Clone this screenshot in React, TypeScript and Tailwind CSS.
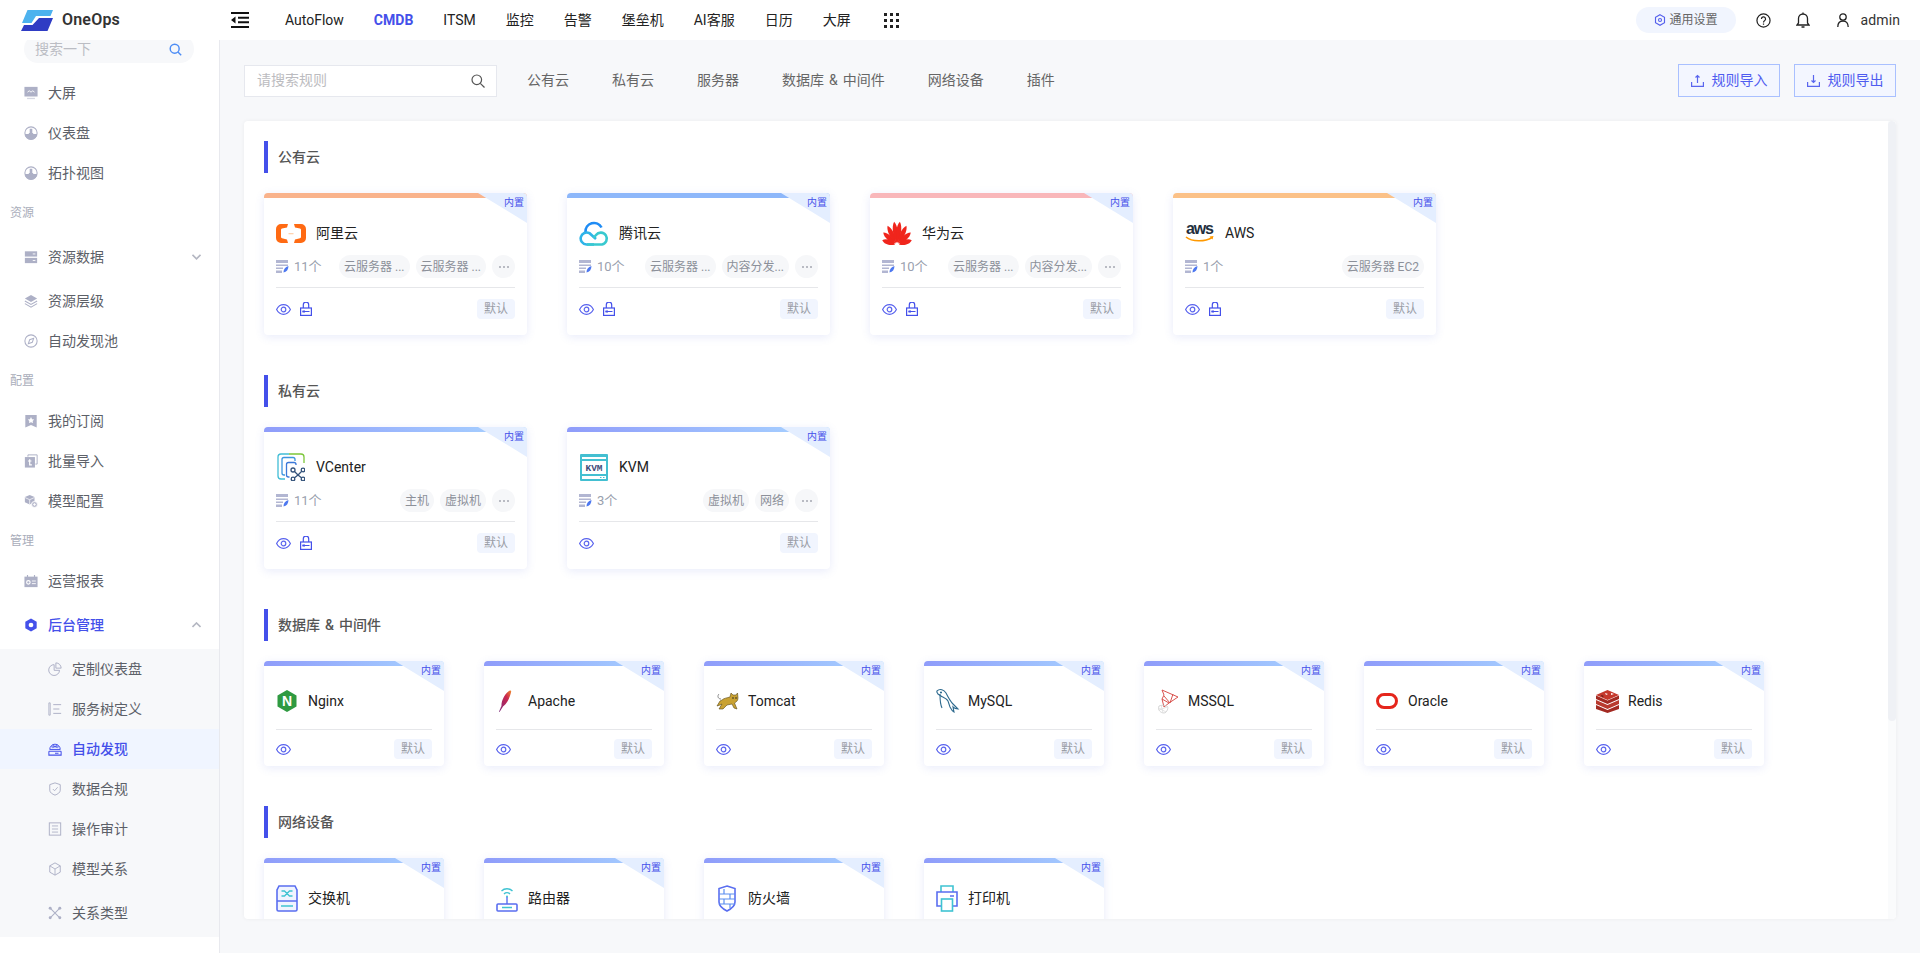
import React from "react";

const Ico = ({ size = 14, color = "#adb0c6", children }: { size?: number; color?: string; children: React.ReactNode }) => (
  <svg width={size} height={size} viewBox="0 0 16 16" fill="none" stroke="none" color={color} className="shrink-0">
    {children}
  </svg>
);

const sideIcons: Record<string, React.ReactNode> = {
  screen: (
    <>
      <rect x="0.500" y="1" width="15" height="11" fill="currentColor" />
      <path d="M4 7l2-1.500 2 1.500 2-1.500 2 1.500" stroke="#fff" strokeWidth="1" />
      <rect x="3.500" y="13.500" width="9" height="1.500" fill="#d5d7e2" />
    </>
  ),
  gauge: (
    <>
      <circle cx="8" cy="8" r="7" stroke="currentColor" strokeWidth="1.200" />
      <path d="M1 9h4.500v-1h1V3h3v5h1v1H15a7 7 0 0 1-14 0z" fill="currentColor" />
    </>
  ),
  server: (
    <>
      <rect x="1" y="1.500" width="14" height="6" fill="currentColor" />
      <rect x="1" y="9" width="14" height="6" fill="currentColor" />
      <rect x="10" y="4" width="3" height="1" fill="#fff" />
      <rect x="10" y="11.500" width="3" height="1" fill="#fff" />
    </>
  ),
  layers: (
    <>
      <path d="M8 1l7 4-7 4-7-4z" fill="currentColor" />
      <path d="M1 8l7 4 7-4M1 11l7 4 7-4" stroke="currentColor" strokeWidth="1.200" />
    </>
  ),
  compass: (
    <>
      <circle cx="8" cy="8" r="7" stroke="currentColor" strokeWidth="1.200" />
      <path d="M11 5l-1.500 4.500L5 11l1.500-4.500z" stroke="currentColor" strokeWidth="1.200" />
    </>
  ),
  bookmark: (
    <>
      <path d="M1.500 1h13v14.500L8 12.500l-6.500 3z" fill="currentColor" />
      <path d="M8 3.500l1.200 2.400 2.500.3-1.800 1.700.5 2.500L8 9.300l-2.400 1.100.5-2.500-1.800-1.700 2.500-.3z" fill="#fff" />
    </>
  ),
  upload: (
    <>
      <path d="M4.500 3V1h10.500v10.500h-2" stroke="currentColor" strokeWidth="1.100" />
      <rect x="1" y="3.500" width="11.500" height="12" fill="currentColor" />
      <path d="M6.500 6v6.500h2.500M4.500 8h4" stroke="#fff" strokeWidth="1.400" />
    </>
  ),
  model: (
    <>
      <path d="M6.500 1l5.500 2.500v6L6.500 12 1 9.500v-6z" fill="currentColor" />
      <path d="M1 4l5.500 2.500L12 4M6.500 6.500V12" stroke="#fff" strokeWidth="0.800" />
      <circle cx="12" cy="12" r="3.500" fill="#bfc1d2" stroke="#fff" />
      <path d="M10.500 12h3M12 10.500v3" stroke="#fff" />
    </>
  ),
  report: (
    <>
      <path d="M0.500 3h15v12h-15z" fill="currentColor" />
      <path d="M4 1v3M12 1v3" stroke="currentColor" strokeWidth="1.300" />
      <circle cx="5" cy="9.500" r="2" stroke="#fff" strokeWidth="1.300" />
      <path d="M9 8h4.500M9 11h4.500" stroke="#fff" />
    </>
  ),
  hex: (
    <>
      <path d="M8 0.500l6.500 3.700v7.600L8 15.500l-6.500-3.700V4.200z" fill="currentColor" />
      <circle cx="8" cy="8" r="2.700" fill="#fff" />
    </>
  ),
  pie: (
    <>
      <path d="M7 3a6.200 6.200 0 1 0 6.200 6.500H7z" stroke="currentColor" strokeWidth="1.100" />
      <path d="M9 1a6 6 0 0 1 6 6H9z" stroke="currentColor" strokeWidth="1.100" />
    </>
  ),
  tree: (
    <>
      <path d="M1 1h1.500v14H1z" stroke="currentColor" strokeWidth="1" />
      <path d="M6 3h9M6 8h7M6 13h9" stroke="currentColor" strokeWidth="1.100" />
    </>
  ),
  discover: (
    <>
      <path d="M2 8.500a6 6 0 0 1 12 0z" stroke="currentColor" strokeWidth="1.100" />
      <path d="M3.500 5.500h9M5 3.500l6 3M11 3.500l-6 3" stroke="currentColor" strokeWidth="0.900" />
      <path d="M1 10.500h14M1 10.500V15h14v-4.500M8 12.800h4" stroke="currentColor" strokeWidth="1.200" />
    </>
  ),
  shield: (
    <>
      <path d="M8 1l6 2v6.500c0 2.500-3 4.500-6 5.500-3-1-6-3-6-5.500V3z" stroke="currentColor" strokeWidth="1.100" />
      <path d="M5.500 8l2 2 3.500-4" stroke="currentColor" strokeWidth="1" />
    </>
  ),
  list: (
    <>
      <rect x="1.500" y="1" width="13" height="14" stroke="currentColor" strokeWidth="1.100" />
      <path d="M4.500 4.500h7M4.500 8h7M4.500 11.500h7" stroke="currentColor" strokeWidth="1" />
    </>
  ),
  cube: (
    <>
      <path d="M8 1l6 3.400v7.200L8 15l-6-3.400V4.400z" stroke="currentColor" strokeWidth="1.100" />
      <path d="M2 4.400L8 8l6-3.600M8 8v7" stroke="currentColor" strokeWidth="1" />
    </>
  ),
  relation: (
    <>
      <path d="M2.500 2.500l11 11M13.500 2.500l-11 11" stroke="currentColor" strokeWidth="1.200" />
      <circle cx="2.500" cy="2.500" r="1.700" fill="currentColor" />
      <circle cx="13.500" cy="2.500" r="1.700" fill="currentColor" />
      <circle cx="2.500" cy="13.500" r="1.700" fill="currentColor" />
      <circle cx="13.500" cy="13.500" r="1.700" fill="currentColor" />
    </>
  ),
};

type SideRow =
  | { kind: "label"; text: string }
  | { kind: "item"; text: string; icon: string; tall?: boolean; arrow?: "up" | "down"; active?: boolean };

const sideTop: SideRow[] = [
  { kind: "item", text: "大屏", icon: "screen" },
  { kind: "item", text: "仪表盘", icon: "gauge" },
  { kind: "item", text: "拓扑视图", icon: "gauge" },
  { kind: "label", text: "资源" },
  { kind: "item", text: "资源数据", icon: "server", tall: true, arrow: "down" },
  { kind: "item", text: "资源层级", icon: "layers" },
  { kind: "item", text: "自动发现池", icon: "compass" },
  { kind: "label", text: "配置" },
  { kind: "item", text: "我的订阅", icon: "bookmark" },
  { kind: "item", text: "批量导入", icon: "upload" },
  { kind: "item", text: "模型配置", icon: "model" },
  { kind: "label", text: "管理" },
  { kind: "item", text: "运营报表", icon: "report" },
  { kind: "item", text: "后台管理", icon: "hex", tall: true, arrow: "up", active: true },
];

const sideSub = [
  { text: "定制仪表盘", icon: "pie" },
  { text: "服务树定义", icon: "tree" },
  { text: "自动发现", icon: "discover", active: true },
  { text: "数据合规", icon: "shield" },
  { text: "操作审计", icon: "list" },
  { text: "模型关系", icon: "cube" },
  { text: "关系类型", icon: "relation", tall: true },
];

const Sidebar = () => (
  <aside className="w-[220px] shrink-0 border-r border-[#e8e9ee] bg-white overflow-hidden">
    <div className="ml-6 -mt-[5px] mb-[10px] flex h-7 w-[170px] items-center justify-between rounded-full bg-[#f7f8fa] pl-[11px] pr-3">
      <span className="text-[14px] text-[#bbbdc4]">搜索一下</span>
      <svg width="13" height="13" viewBox="0 0 16 16" fill="none" stroke="#4d8df5" strokeWidth="1.800">
        <circle cx="7" cy="7" r="5.500" />
        <path d="M11 11l4 4" />
      </svg>
    </div>
    {sideTop.map((r) =>
      r.kind === "label" ? (
        <div key={r.text} className="flex h-10 items-center pl-[10px] text-[12px] text-[#a9adba]">
          {r.text}
        </div>
      ) : (
        <div key={r.text} className={`flex items-center gap-[10px] pl-6 pr-[18px] ${r.tall ? "h-12" : "h-10"}`}>
          <Ico color={r.active ? "#4450ea" : "#adb0c6"}>{sideIcons[r.icon]}</Ico>
          <span className={`text-[14px] ${r.active ? "font-medium text-[#4450ea]" : "text-[#5c6068]"}`}>{r.text}</span>
          {r.arrow && (
            <svg width="9" height="6" viewBox="0 0 9 6" fill="none" stroke="#b4b7c2" strokeWidth="1.600" className="ml-auto">
              <path d={r.arrow === "down" ? "M0.500 0.800l4 4 4-4" : "M0.500 5l4-4 4 4"} />
            </svg>
          )}
        </div>
      ),
    )}
    <div className="bg-[#f7f8fa]">
      {sideSub.map((r) => (
        <div
          key={r.text}
          className={`flex items-center gap-[10px] pl-12 ${r.tall ? "h-12" : "h-10"} ${r.active ? "bg-[#f0f5ff]" : ""}`}
        >
          <Ico color={r.active ? "#4450ea" : "#adb0c6"}>{sideIcons[r.icon]}</Ico>
          <span className={`text-[14px] ${r.active ? "font-medium text-[#4450ea]" : "text-[#5c6068]"}`}>{r.text}</span>
        </div>
      ))}
    </div>
  </aside>
);

const navItems = ["AutoFlow", "CMDB", "ITSM", "监控", "告警", "堡垒机", "AI客服", "日历", "大屏"];

const Header = () => (
  <header className="flex h-10 shrink-0 items-center bg-white">
    <div className="flex w-[231px] shrink-0 items-center pl-[21px]">
      <svg width="32" height="21" viewBox="0 0 32 21">
        <path d="M6.500 0H32l-2.500 6H15l-4.500 7H1z" fill="#4db2ee" />
        <path d="M0 21l3-6h8.500L18 8h14l-5.500 13z" fill="#2f3cc4" />
      </svg>
      <span className="ml-[9px] text-[16px] font-semibold tracking-[0.2px] text-[#333]">OneOps</span>
    </div>
    <svg width="18" height="16" viewBox="0 0 18 16" className="shrink-0">
      <path d="M0 0h18v2H0zM0 14h18v2H0zM7 4.700h11v2H7zM7 9.300h11v2H7zM4.500 4.500v7L0 8z" fill="#111" />
    </svg>
    <nav className="ml-9 flex items-center gap-[30px] text-[14px] text-[#222]">
      {navItems.map((n) => (
        <span key={n} className={n === "CMDB" ? "font-bold text-[#4450ea]" : ""}>
          {n}
        </span>
      ))}
      <div className="grid grid-cols-3 gap-[3px] pl-[3px]">
        {Array.from({ length: 9 }).map((_, i) => (
          <span key={i} className="h-[3px] w-[3px] bg-[#222]" />
        ))}
      </div>
    </nav>
    <div className="ml-auto flex items-center pr-5">
      <div className="flex h-[26px] w-[100px] items-center justify-center gap-1 rounded-full bg-[#f1f5fe] text-[12px] text-[#666]">
        <Ico size={12} color="#5560ec">
          <path d="M8 1l6 3.500v7L8 15l-6-3.500v-7z" stroke="currentColor" strokeWidth="1.500" />
          <circle cx="8" cy="8" r="2" stroke="currentColor" strokeWidth="1.500" />
        </Ico>
        通用设置
      </div>
      <svg width="15" height="15" viewBox="0 0 16 16" fill="none" stroke="#222" strokeWidth="1.300" className="ml-5">
        <circle cx="8" cy="8" r="7" />
        <path d="M5.800 6.300a2.200 2.200 0 1 1 3.300 1.900c-.7.400-1.100.9-1.100 1.800M8 11.300v1.200" />
      </svg>
      <svg width="14" height="16" viewBox="0 0 14 16" fill="none" stroke="#222" strokeWidth="1.300" className="ml-[25px]">
        <path d="M1 13h12l-1.500-2V6.500a4.500 4.500 0 0 0-9 0V11zM7 .500V2M5.500 15h3" />
      </svg>
      <svg width="12" height="14" viewBox="0 0 12 14" fill="none" stroke="#222" strokeWidth="1.300" className="ml-[27px]">
        <circle cx="6" cy="4" r="3.200" />
        <path d="M.8 14c0-3.500 1.800-6 5.200-6s5.200 2.500 5.200 6" />
      </svg>
      <span className="ml-3 text-[14px] tracking-[0.1px] text-[#333]">admin</span>
    </div>
  </header>
);

const Eye = () => (
  <svg width="15" height="11" viewBox="0 0 15 11" fill="none" stroke="#5a64ee" strokeWidth="1.200" className="shrink-0">
    <path d="M.6 5.500C2.200 2.300 4.600.7 7.500.7s5.300 1.600 6.900 4.800c-1.600 3.200-4 4.800-6.900 4.800S2.200 8.700.6 5.500z" />
    <circle cx="7.500" cy="5.500" r="2.300" />
  </svg>
);

const Lock = () => (
  <svg width="12" height="14" viewBox="0 0 12 14" fill="none" stroke="#4450ea" strokeWidth="1.200" className="shrink-0">
    <path d="M3.300 6V2.800a2.700 2.700 0 0 1 5.400 0V6" />
    <rect x=".6" y="6" width="10.800" height="7.400" />
    <path d="M2.500 9.500h7" />
    <rect x="2.500" y="8.500" width="2.500" height="2" fill="#4450ea" stroke="none" />
  </svg>
);

const ListIcon = () => (
  <svg width="13" height="13" viewBox="0 0 13 13" className="shrink-0">
    <path d="M0 0h12v3H0zM0 4.500h12v1.500H0zM0 7.500h7v1.500H0zM0 10.500h6V13H0z" fill="#b2b6d2" />
    <path d="M7.500 12.500c0-3 1.500-5.500 5-6.500-.2 3.500-1.800 6-5 6.500z" fill="#4d78f0" />
  </svg>
);

const logos: Record<string, React.ReactNode> = {
  ali: (
    <svg width="30" height="19" viewBox="0 0 30 19">
      <path d="M12 0H5a5 5 0 0 0-5 5v9a5 5 0 0 0 5 5h7l-1-3.500-5-1.200a1.200 1.200 0 0 1-1-1.200V5.700a1.200 1.200 0 0 1 1-1.200l5-1z" fill="#ff6a13" />
      <path d="M18 0h7a5 5 0 0 1 5 5v9a5 5 0 0 1-5 5h-7l1-3.500 5-1.200a1.200 1.200 0 0 0 1-1.200V5.700a1.200 1.200 0 0 0-1-1.200l-5-1z" fill="#ff6a13" />
      <rect x="12.500" y="9" width="5" height="1.300" fill="#ffd3b0" />
    </svg>
  ),
  tencent: (
    <svg width="30" height="26" viewBox="0 0 30 26" fill="none" strokeWidth="2.600">
      <path d="M6.500 12a8.500 8.500 0 0 1 16-4.500" stroke="#1f8cf5" />
      <path d="M15 24.500H7.500a6 6 0 1 1 3-11.300L17 19" stroke="#2fb4e8" />
      <path d="M8 24.500h15a6 6 0 1 0-6-9.500l-2.500 3" stroke="#38c9cf" />
    </svg>
  ),
  huawei: (
    <svg width="30" height="24" viewBox="0 0 30 24" fill="#f0251c">
      {[
        [-72, 15.500],
        [-48, 18.500],
        [-26, 21.500],
        [-7, 23.500],
        [7, 23.500],
        [26, 21.500],
        [48, 18.500],
        [72, 15.500],
      ].map(([a, l]) => (
        <path key={a} transform={`translate(15 24) rotate(${a})`} d={`M0-2C-3-${l * 0.4}-3.400-${l * 0.8} 0-${l}C3.400-${l * 0.8} 3-${l * 0.4} 0-2Z`} />
      ))}
    </svg>
  ),
  aws: (
    <svg width="30" height="24" viewBox="0 0 30 24">
      <text x="1" y="13" fontSize="16" fontWeight="700" fill="#232f3e" fontFamily="Liberation Sans, sans-serif" textLength="28">
        aws
      </text>
      <path d="M1 16c6 5 19 5 26 .5" fill="none" stroke="#f90" strokeWidth="1.600" />
      <path d="M24.500 15.500l4-.5-1 3.500z" fill="#f90" />
    </svg>
  ),
  vcenter: (
    <svg width="28" height="28" viewBox="0 0 28 28" fill="none" strokeWidth="1.300" className="ml-px">
      <path d="M12 1H4a3 3 0 0 0-3 3v19a3 3 0 0 0 3 3h4" stroke="#41bdd6" />
      <path d="M12 1h12a3 3 0 0 1 3 3v6" stroke="#7cc63a" />
      <path d="M18 8V6.500a2 2 0 0 0-2-2H7a2 2 0 0 0-2 2V20a2 2 0 0 0 2 2h1" stroke="#3c95df" />
      <path d="M19 12v-.5a2 2 0 0 0-2-2h-5.500a2 2 0 0 0-2 2V22a2 2 0 0 0 2 2h1" stroke="#3c78d8" />
      <path d="M16 17l5 5M26 17l-5 5M16 26l5-4M26 26l-5-4" stroke="#33527a" />
      <circle cx="16" cy="17" r="2" fill="#fff" stroke="#33527a" />
      <circle cx="26" cy="17" r="1.800" fill="#fff" stroke="#33527a" />
      <circle cx="16" cy="26" r="1.800" fill="#fff" stroke="#33527a" />
      <circle cx="26" cy="26" r="1.800" fill="#fff" stroke="#33527a" />
    </svg>
  ),
  kvm: (
    <svg width="28" height="27" viewBox="0 0 28 27" className="ml-px">
      <rect width="28" height="27" rx="1" fill="#43bfd1" />
      <rect x="2" y="3" width="24" height="2" fill="#fff" />
      <rect x="2" y="7" width="24" height="13" fill="#fff" />
      <rect x="2" y="22" width="24" height="3" fill="#fff" />
      <rect x="20" y="23" width="1.500" height="1" fill="#43bfd1" />
      <rect x="23" y="23" width="1.500" height="1" fill="#43bfd1" />
      <text x="14" y="17" textAnchor="middle" fontSize="9.500" fontWeight="700" fill="#3f4c7a" fontFamily="Liberation Mono, monospace">
        KVM
      </text>
    </svg>
  ),
  nginx: (
    <svg width="22" height="22" viewBox="0 0 22 22">
      <path d="M11 0l9.500 5.500v11L11 22l-9.500-5.500v-11z" fill="#2f9a41" />
      <text x="11" y="16" textAnchor="middle" fontSize="14" fontWeight="700" fill="#fff" fontFamily="Liberation Sans, sans-serif">
        N
      </text>
    </svg>
  ),
  apache: (
    <svg width="22" height="23" viewBox="0 0 22 23">
      <defs>
        <linearGradient id="feather" x1="1" y1="0" x2="0" y2="1">
          <stop offset="0" stopColor="#f08a2c" />
          <stop offset="0.35" stopColor="#c9264f" />
          <stop offset="1" stopColor="#7a2a7c" />
        </linearGradient>
      </defs>
      <path d="M3 22c1-3 1.500-4 2.500-6C5 11 9 3 14 .5c1-.3 1.500.5 1 2-1 4-3 10-8 14-1 1.500-2 3.500-3.500 5.500z" fill="url(#feather)" />
    </svg>
  ),
  tomcat: (
    <svg width="24" height="20" viewBox="0 0 24 20">
      <path d="M6 9c2-2 5-2 8-3l1-4 2 2h3l1.500-2 .5 5c0 3-2 4-3.500 5l2.500 6-3-1-2-4-5 1-4 4H3l3-5-2 1-3 1 3-5z" fill="#c9a233" stroke="#5a4a1a" strokeWidth="0.600" />
      <path d="M5 8C2 8 1 5 3 3" fill="none" stroke="#888" />
      <circle cx="17" cy="7" r="0.800" fill="#222" />
      <circle cx="20" cy="7" r="0.800" fill="#222" />
    </svg>
  ),
  mysql: (
    <svg width="24" height="26" viewBox="0 0 24 26" fill="none" stroke="#2f6b8f" strokeWidth="1.100">
      <path d="M1 3c3-3 7-1 9 2 2 4 4 8 7 11 2 2 4 4 5 5-2 0-4-1-5-2l1 5c-2-1-3-3-4-5l-2-6C10 10 6 9 5 8L2 6 .8 4z" />
      <path d="M4 6c0 5 0 10 2 14" />
      <circle cx="5" cy="4.500" r="0.500" fill="#2f6b8f" />
    </svg>
  ),
  mssql: (
    <svg width="23" height="25" viewBox="0 0 23 25" fill="none" strokeWidth="0.800">
      <path d="M6 1l16 7-9 6-7-4 2-4zM8 7l6 7 3-9M6 10l2 8 5-4" stroke="#d9534f" strokeWidth="1" />
      <path d="M3 17c2-1 6-1 8 0s0 7-3 7-7-3-5-7z" stroke="#ccc" />
      <path d="M3 19l7 4M5 16l2 8M11 18l-8 3" stroke="#ddd" />
    </svg>
  ),
  oracle: (
    <svg width="22" height="16" viewBox="0 0 22 16">
      <rect x="1.500" y="1.500" width="19" height="13" rx="6.500" fill="none" stroke="#e5261c" strokeWidth="3" />
    </svg>
  ),
  redis: (
    <svg width="23" height="23" viewBox="0 0 23 23">
      <path d="M0 15l11.500 5L23 15v4l-11.500 4L0 19z" fill="#a32a22" />
      <path d="M0 10l11.500 5L23 10v4l-11.500 5L0 14z" fill="#b93a2e" />
      <path d="M0 5.500l11.500 5L23 5.500V9l-11.500 5L0 9z" fill="#a32a22" />
      <path d="M11.500 0L23 5l-11.500 5L0 5z" fill="#c5382c" />
      <path d="M9 3l3 1-2 1zM15 3l3 1-3 1z" fill="#fff" />
      <path d="M5 5l3 1-2 1z" fill="#5c1a15" />
    </svg>
  ),
  switch: (
    <svg width="22" height="27" viewBox="0 0 22 27" fill="none">
      <path d="M3 1h16l2 4v19.500a1.500 1.500 0 0 1-1.500 1.500h-17A1.500 1.500 0 0 1 1 24.500V5z" fill="#f0f4ff" stroke="#5a6ef0" strokeWidth="1.600" />
      <path d="M1 16h20" stroke="#5a6ef0" strokeWidth="1.600" />
      <path d="M5.500 6h3l5 5h3M5.500 11h3l5-5h3" stroke="#3fc3d2" strokeWidth="1.300" />
      <path d="M5 21h12" stroke="#3fc3d2" strokeWidth="1.600" />
    </svg>
  ),
  router: (
    <svg width="22" height="27" viewBox="0 0 22 27" fill="none">
      <path d="M5.500 6c3-3 8-3 11 0M8 9c1.700-1.700 4.300-1.700 6 0" stroke="#3fc3d2" strokeWidth="1.400" />
      <circle cx="11" cy="11.500" r="1" fill="#3fc3d2" />
      <path d="M11 12v7" stroke="#5a6ef0" strokeWidth="1.400" />
      <rect x="1" y="19" width="20" height="7" rx="1" stroke="#5a6ef0" strokeWidth="1.600" />
      <path d="M6 22.500h10" stroke="#3fc3d2" strokeWidth="1.400" />
    </svg>
  ),
  firewall: (
    <svg width="20" height="27" viewBox="0 0 20 27" fill="none" className="ml-px">
      <path d="M10 1l8 2.500V17c0 4-4 7-8 9-4-2-8-5-8-9V3.500z" stroke="#5a6ef0" strokeWidth="1.600" />
      <path d="M2 9h16M2 14h16M2 19h16M7 4v5M13 9v5M7 14v5M13 19v4" stroke="#5a8ef0" strokeWidth="1.200" />
    </svg>
  ),
  printer: (
    <svg width="22" height="27" viewBox="0 0 22 27" fill="none">
      <path d="M5 7V1h12v6" stroke="#3fc3d2" strokeWidth="1.600" />
      <path d="M5 21H1V7h20v14h-4" stroke="#5a6ef0" strokeWidth="1.600" />
      <rect x="5.500" y="14" width="11" height="12" stroke="#3fc3d2" strokeWidth="1.600" />
      <path d="M14 11h4" stroke="#5a6ef0" strokeWidth="1.400" />
    </svg>
  ),
};

const Tag = ({ children }: { children: React.ReactNode }) => (
  <span className="flex h-[23px] items-center whitespace-nowrap rounded-full bg-[#f6f7f9] px-[5px] text-[12px] text-[#8c9099]">
    {children}
  </span>
);

const Corner = () => (
  <>
    <div className="absolute right-0 top-0 h-[30px] w-[49px] bg-[#e4eeff] [clip-path:polygon(0_0,100%_0,100%_100%)]" />
    <span className="absolute right-[3px] top-[3px] text-[10px] leading-[14px] text-[#4450ea]">内置</span>
  </>
);

type CardData = {
  logo: string;
  name: string;
  count?: string;
  tags?: string[];
  more?: boolean;
  lock?: boolean;
  strip?: string;
};

const Badge = () => (
  <span className="flex h-5 w-[38px] items-center justify-center rounded-sm bg-[#f1f5fe] text-[12px] text-[#9a9da6]">默认</span>
);

const gradient = "bg-gradient-to-r from-[#8f9cfa] to-[#a8d4ff]";

const LargeCard = ({ c }: { c: CardData }) => (
  <div className="relative h-[142px] w-[263px] shrink-0 overflow-hidden rounded bg-white shadow-[0_2px_10px_rgba(80,100,220,0.13)]">
    <div className={`h-[5px] ${c.strip ?? gradient}`} />
    <Corner />
    <div className="mt-5 flex h-[30px] items-center px-3">
      <div className="w-[30px] shrink-0">{logos[c.logo]}</div>
      <span className="ml-[10px] text-[14px] text-[#222]">{c.name}</span>
    </div>
    <div className="mx-3 mt-[7px] flex h-[23px] items-center gap-[6px]">
      <ListIcon />
      <span className="-ml-[1px] mr-auto text-[13px] text-[#9a9fae]">{c.count}</span>
      {c.tags?.map((t) => <Tag key={t + c.name}>{t}</Tag>)}
      {c.more && (
        <span className="flex h-[23px] w-[23px] items-center justify-center gap-[2px] rounded-full bg-[#f6f7f9]">
          <i className="h-[2px] w-[2px] rounded-full bg-[#a4a7b0]" />
          <i className="h-[2px] w-[2px] rounded-full bg-[#a4a7b0]" />
          <i className="h-[2px] w-[2px] rounded-full bg-[#a4a7b0]" />
        </span>
      )}
    </div>
    <div className="mx-3 mt-[9px] h-px bg-[#e6e7ea]" />
    <div className="mx-3 mt-[11px] flex h-5 items-center gap-[9px]">
      <Eye />
      {c.lock && <Lock />}
      <span className="ml-auto">
        <Badge />
      </span>
    </div>
  </div>
);

const SmallCard = ({ c }: { c: CardData }) => (
  <div className="relative h-[105px] w-[180px] shrink-0 overflow-hidden rounded bg-white shadow-[0_2px_10px_rgba(80,100,220,0.13)]">
    <div className={`h-[5px] ${gradient}`} />
    <Corner />
    <div className="mt-5 flex h-[30px] items-center px-3">
      <div className="w-[24px] shrink-0">{logos[c.logo]}</div>
      <span className="ml-2 text-[14px] text-[#222]">{c.name}</span>
    </div>
    <div className="mx-3 mt-[13px] h-px bg-[#e6e7ea]" />
    <div className="mx-3 mt-[9px] flex h-5 items-center">
      <Eye />
      <span className="ml-auto">
        <Badge />
      </span>
    </div>
  </div>
);

const Section = ({ title, children }: { title: string; children: React.ReactNode }) => (
  <section className="mb-10">
    <div className="mb-5 flex h-8 items-center border-l-4 border-[#4450ea] pl-[10px] text-[14px] font-medium text-[#555] [word-spacing:1.5px]">
      {title}
    </div>
    <div className="flex gap-10">{children}</div>
  </section>
);

const publicCloud: CardData[] = [
  { logo: "ali", name: "阿里云", count: "11个", tags: ["云服务器 ...", "云服务器 ..."], more: true, lock: true, strip: "bg-[#f9b38c]" },
  { logo: "tencent", name: "腾讯云", count: "10个", tags: ["云服务器 ...", "内容分发..."], more: true, lock: true, strip: "bg-[#8db7fa]" },
  { logo: "huawei", name: "华为云", count: "10个", tags: ["云服务器 ...", "内容分发..."], more: true, lock: true, strip: "bg-[#f9b7ba]" },
  { logo: "aws", name: "AWS", count: "1个", tags: ["云服务器 EC2"], lock: true, strip: "bg-[#fbc188]" },
];

const privateCloud: CardData[] = [
  { logo: "vcenter", name: "VCenter", count: "11个", tags: ["主机", "虚拟机"], more: true, lock: true },
  { logo: "kvm", name: "KVM", count: "3个", tags: ["虚拟机", "网络"], more: true },
];

const databases: CardData[] = [
  { logo: "nginx", name: "Nginx" },
  { logo: "apache", name: "Apache" },
  { logo: "tomcat", name: "Tomcat" },
  { logo: "mysql", name: "MySQL" },
  { logo: "mssql", name: "MSSQL" },
  { logo: "oracle", name: "Oracle" },
  { logo: "redis", name: "Redis" },
];

const network: CardData[] = [
  { logo: "switch", name: "交换机" },
  { logo: "router", name: "路由器" },
  { logo: "firewall", name: "防火墙" },
  { logo: "printer", name: "打印机" },
];

const tabs = ["公有云", "私有云", "服务器", "数据库 & 中间件", "网络设备", "插件"];

const ActionButton = ({ label, up }: { label: string; up?: boolean }) => (
  <button className="flex h-[33px] w-[102px] items-center justify-center gap-2 border border-[#a9c0ff] bg-[#f3f6ff] text-[14px] text-[#4f5cf0]">
    <svg width="13" height="13" viewBox="0 0 13 13" fill="none" stroke="#5a66ee" strokeWidth="1.200">
      <path d="M.6 8v4.400h11.800V8" />
      <path d={up ? "M6.500 9V1.500M4.500 3.500l2-2 2 2" : "M6.500 1v7.500M4.500 6.500l2 2 2-2"} />
    </svg>
    {label}
  </button>
);

export default function App() {
  return (
    <div className="flex h-screen w-full flex-col overflow-hidden bg-[#f7f8fa] font-['Roboto','Noto_Sans_CJK_SC',sans-serif]">
      <Header />
      <div className="flex min-h-0 flex-1">
        <Sidebar />
        <main className="min-w-0 flex-1 px-6 pt-6">
          <div className="flex h-[33px] items-center">
            <div className="flex h-8 w-[253px] items-center justify-between border border-[#e6e8ee] bg-white pl-3 pr-[11px]">
              <span className="text-[14px] text-[#bcbcc0]">请搜索规则</span>
              <svg width="14" height="14" viewBox="0 0 14 14" fill="none" stroke="#555" strokeWidth="1.200">
                <circle cx="5.800" cy="5.800" r="4.800" />
                <path d="M9.300 9.300L13.500 13.500" />
              </svg>
            </div>
            <div className="ml-[30px] flex gap-[43px] text-[14px] text-[#666] [word-spacing:1.5px]">
              {tabs.map((t) => (
                <span key={t}>{t}</span>
              ))}
            </div>
            <div className="ml-auto flex gap-[14px]">
              <ActionButton label="规则导入" up />
              <ActionButton label="规则导出" />
            </div>
          </div>
          <div className="mt-6 flex h-[798px] overflow-hidden rounded bg-white shadow-[0_0_4px_rgba(0,0,0,0.05)]">
            <div className="min-w-0 flex-1 overflow-hidden pl-5 pt-5">
              <Section title="公有云">
                {publicCloud.map((c) => (
                  <LargeCard key={c.name} c={c} />
                ))}
              </Section>
              <Section title="私有云">
                {privateCloud.map((c) => (
                  <LargeCard key={c.name} c={c} />
                ))}
              </Section>
              <Section title="数据库 & 中间件">
                {databases.map((c) => (
                  <SmallCard key={c.name} c={c} />
                ))}
              </Section>
              <Section title="网络设备">
                {network.map((c) => (
                  <SmallCard key={c.name} c={c} />
                ))}
              </Section>
            </div>
            <div className="w-2 shrink-0 bg-[#fafbfc]">
              <div className="h-[600px] rounded-full bg-[#eff1f5]" />
            </div>
          </div>
        </main>
      </div>
    </div>
  );
}
